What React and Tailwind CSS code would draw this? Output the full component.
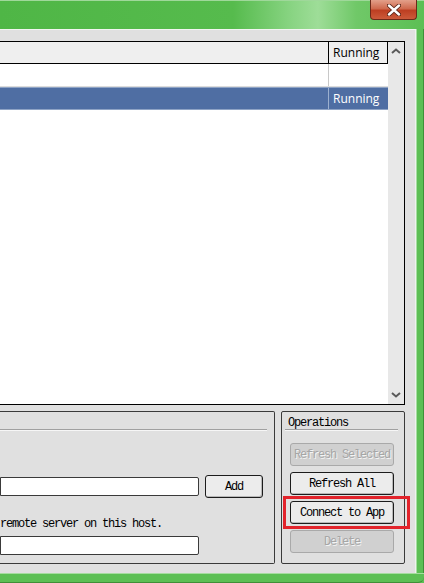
import React from 'react';

const mono = "font-['Liberation_Mono','Courier_New',monospace] text-[12px] tracking-[-1.2px]";

function Chevron({ up }) {
  return (
    <svg width="10" height="6" viewBox="0 0 10 6">
      <path
        d={up ? 'M1 5 L5 1.5 L9 5' : 'M1 1 L5 4.5 L9 1'}
        fill="none"
        stroke="#5a5a5a"
        strokeWidth="2"
      />
    </svg>
  );
}

function WinButton({ children, disabled, width = 'w-[104px]' }) {
  if (disabled) {
    return (
      <div className={`h-[23px] ${width} shrink-0 flex items-center justify-center rounded-[3px] border border-[#a9a9a9] bg-[#d0d0d0] text-[#a6a6a6] [text-shadow:1px_1px_0_#f4f4f4] ${mono}`}>
        {children}
      </div>
    );
  }
  return (
    <div className={`h-[23px] ${width} shrink-0 flex items-center justify-center rounded-[3px] border border-[#1c1c1c] bg-[#ececec] shadow-[inset_-1px_-1px_0_#b8b8b8] text-black ${mono}`}>
      {children}
    </div>
  );
}

export default function App() {
  return (
    <div className="w-[424px] h-[583px] flex flex-col overflow-hidden bg-[#5cbf54] font-['Open_Sans',sans-serif]">
      {/* title bar */}
      <div className="relative h-[29px] shrink-0 border-t border-[#9fd89a] bg-[linear-gradient(90deg,#4fb646_0%,#56bb4d_55%,#86d380_68%,#9edd98_75%,#70c868_84%,#5cbf54_100%)]">
        <div className="absolute left-[370px] top-[-1px] w-[47px] h-[20px] rounded-b-[4px] border border-t-0 border-[#6b2a1a] bg-[linear-gradient(180deg,#e3a08a_0%,#cf6a4e_45%,#bd3f22_55%,#cc5a3a_100%)] flex items-center justify-center">
          <svg width="14" height="12" viewBox="0 0 14 12">
            <path d="M2 1.5 L12 10.5 M12 1.5 L2 10.5" stroke="#5a2416" strokeWidth="4.2" strokeLinecap="round" />
            <path d="M2 1.5 L12 10.5 M12 1.5 L2 10.5" stroke="#ffffff" strokeWidth="2.4" strokeLinecap="round" />
          </svg>
        </div>
      </div>

      <div className="flex flex-1 min-h-0">
        {/* client */}
        <div className="flex-1 flex flex-col bg-[#e0e0e0] border-t border-[#f2f5f1] border-r border-r-[#eef3ed] pt-[11px] pr-[10px]">
          {/* list */}
          <div className="h-[364px] shrink-0 flex border-t border-r border-b border-black bg-white">
            <div className="flex-1 flex flex-col">
              <div className="h-[22px] flex border-b border-black bg-[#efefef] text-[12px] text-black">
                <div className="w-[329px] border-r border-black" />
                <div className="flex-1 border-r border-black pl-[4px] flex items-center">Running</div>
              </div>
              <div className="h-[23px] flex border-b border-[#dcdcdc]">
                <div className="w-[329px] border-r border-[#c8c8c8]" />
                <div className="flex-1" />
              </div>
              <div className="h-[23px] flex bg-[#4f6ea3] border-y border-[#8ea3c5] text-white text-[12px]">
                <div className="w-[329px] border-r border-[#9cb0cf]" />
                <div className="flex-1 pl-[4px] flex items-center">Running</div>
              </div>
            </div>
            <div className="w-[16px] bg-[#e8e8e8] flex flex-col items-center justify-between pt-[6px] pb-[6px]">
              <Chevron up />
              <Chevron />
            </div>
          </div>

          {/* bottom groups */}
          <div className="mt-[6px] h-[153px] shrink-0 flex gap-[6px]">
            <div className="w-[275px] flex flex-col border-t border-r border-b border-[#3a3a3a] rounded-r-[2px]">
              <div className="h-[17px]" />
              <div className="h-[2px] mr-[7px] border-t border-[#a0a0a0] border-b border-b-[#f6f6f6]" />
              <div className="mt-[44px] h-[23px] flex items-center gap-[6px]">
                <div className="w-[199px] shrink-0 h-[19px] bg-white border border-[#3a3a3a] rounded-r-[2px]" />
                <WinButton width="w-[58px]">Add</WinButton>
              </div>
              <div className={`mt-[20px] h-[13px] leading-[13px] text-black ${mono}`}>remote server on this host.</div>
              <div className="mt-[5px] w-[199px] h-[19px] bg-white border border-[#3a3a3a] rounded-r-[2px]" />
            </div>

            <div className="flex-1 flex flex-col border border-[#3a3a3a] rounded-[2px]">
              <div className={`h-[17px] pl-[6px] pt-[4px] flex items-center text-black ${mono}`}>Operations</div>
              <div className="h-[2px] ml-[3px] mr-[6px] border-t border-[#a0a0a0] border-b border-b-[#f6f6f6]" />
              <div className="mt-[12px] ml-[8px] flex flex-col gap-[6px]">
                <WinButton disabled>Refresh Selected</WinButton>
                <WinButton>Refresh All</WinButton>
                <div className="relative">
                  <WinButton>Connect to App</WinButton>
                  <div className="absolute -left-[7px] -top-[5px] -right-[6px] -bottom-[5px] border-[3px] border-[#e2232b]" />
                </div>
                <WinButton disabled>Delete</WinButton>
              </div>
            </div>
          </div>
        </div>

        {/* right frame */}
        <div className="w-[8px] shrink-0 border-l border-[#a6dca0] border-r border-r-[#3f8f38] bg-[#5cbf54]" />
      </div>

      {/* bottom frame */}
      <div className="h-[10px] shrink-0 border-t border-[#a6dca0] border-b border-b-[#3f8f38] bg-[#5cbf54] rounded-br-[6px]" />
    </div>
  );
}
